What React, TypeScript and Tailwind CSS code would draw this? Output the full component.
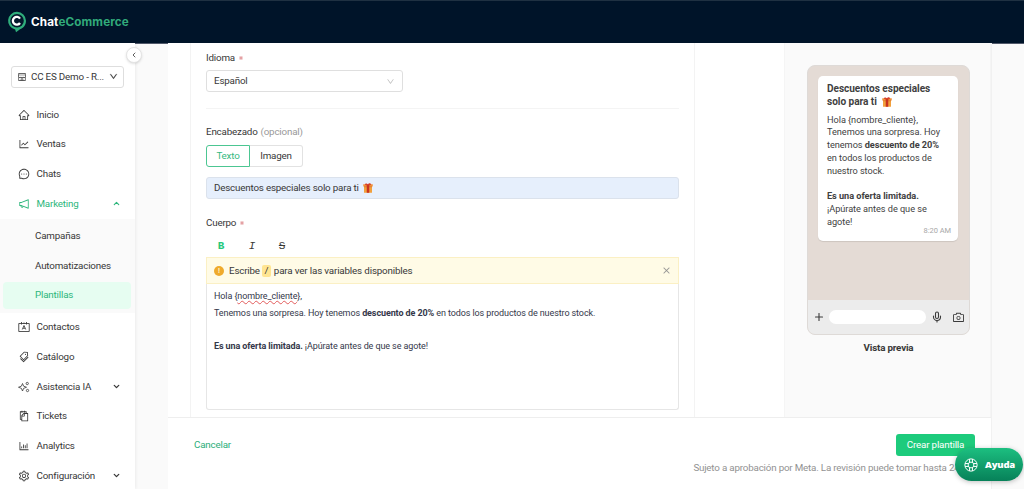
import type { ReactNode } from "react";
import {
  AiOutlineBarChart,
  AiOutlineCamera,
  AiOutlineClose,
  AiOutlineDown,
  AiOutlineHome,
  AiOutlineLineChart,
  AiOutlineMessage,
  AiOutlineNotification,
  AiOutlineSetting,
  AiOutlineShop,
  AiOutlineSnippets,
  AiOutlineTags,
} from "react-icons/ai";
import { ChevronDown, ChevronLeft, ChevronUp, Mic, Plus } from "lucide-react";

function Gift({ className }: { className: string }) {
  return (
    <svg viewBox="0 0 20 20" className={className}>
      <path d="M2 6h16v13.500H2z" fill="#f2a03c" />
      <path d="M2 6h16v2.500H2z" fill="#d9782c" />
      <path d="M.5 2.500h19v4.500H.5z" fill="#f0913a" />
      <path d="M7.500 3h5v16.500h-5z" fill="#c8321f" />
      <path d="M10 4.500C7 5 3.500 4.500 4 2c.8-2 5-1 6 1.500C11-.999 15.200 0 16 2c.5 2.500-3 3-6 2.500z" fill="#d8402a" />
    </svg>
  );
}

function ContactIcon() {
  return (
    <svg viewBox="0 0 24 24" className="size-[12px]" fill="none" stroke="currentColor" strokeWidth="1.700">
      <path d="M1.500 5h21v16h-21zM7 2v5M17 2v5M12 3v3" />
      <path d="M8.500 17l3.500-8 3.500 8M10 14.500h4" />
    </svg>
  );
}

function SparkIcon() {
  return (
    <svg viewBox="0 0 24 24" className="size-[11px]" fill="none" stroke="currentColor" strokeWidth="1.600" strokeLinejoin="round">
      <path d="M9 5l2.200 5.300L17 12.500l-5.800 2.200L9 20l-2.200-5.300L1 12.500l5.800-2.200z" />
      <circle cx="18.500" cy="5" r="2.300" />
      <circle cx="19" cy="19" r="2.300" />
    </svg>
  );
}

function Logo() {
  return (
    <svg viewBox="0 0 20 22" className="h-[22px] w-[20px]">
      <path d="M10 .8a9 9 0 0 1 9 9c0 4.200-2.600 7.300-6 8.500L9 21.300l-.8-2.700A9 9 0 0 1 10 .8z" fill="#2fae7c" />
      <circle cx="10" cy="9.800" r="6.800" fill="#04182c" />
      <path d="M13 7.600a3.900 3.900 0 1 0 0 4.400" fill="none" stroke="#fff" strokeWidth="2.300" />
    </svg>
  );
}

function Row({ icon, label, arrow, active }: { icon: ReactNode; label: string; arrow?: "up" | "down"; active?: boolean }) {
  return (
    <div className={`flex h-[29.65px] items-center pl-[18px] pr-[14px] ${active ? "text-[#2db67c]" : "text-[#383838]"}`}>
      <span className="flex w-[18.500px] items-center [&>svg]:size-[12px]">{icon}</span>
      <span className="flex-1">{label}</span>
      {arrow === "up" && <ChevronUp className="size-[9px]" strokeWidth={3} />}
      {arrow === "down" && <ChevronDown className="size-[9px]" strokeWidth={3.400} />}
    </div>
  );
}

function Sidebar() {
  return (
    <aside className="w-[135px] shrink-0 bg-white shadow-[1px_0_3px_rgba(0,0,0,0.06)]">
      <div className="mx-[11px] mt-[22.500px] flex h-[22px] items-center rounded-[3px] border border-[#dedede] px-[5px] text-[#383838]">
        <AiOutlineShop className="size-[10px]" />
        <span className="ml-[4px] flex-1 whitespace-nowrap">CC ES Demo - R...</span>
        <AiOutlineDown className="size-[9px] stroke-[35] stroke-current" />
      </div>
      <nav className="mt-[12.500px]">
        <Row icon={<AiOutlineHome />} label="Inicio" />
        <Row icon={<AiOutlineLineChart />} label="Ventas" />
        <Row icon={<AiOutlineMessage />} label="Chats" />
        <Row icon={<AiOutlineNotification />} label="Marketing" arrow="up" active />
        <div className="bg-[#fafafa] py-[2.600px] text-[#383838]">
          <div className="flex h-[29.650px] items-center pl-[35px]">Campañas</div>
          <div className="flex h-[29.650px] items-center pl-[35px]">Automatizaciones</div>
          <div className="flex h-[29.650px] items-center px-[3px]">
            <div className="flex h-[27px] w-[128px] items-center rounded-[4px] bg-[#e6fdf1] pl-[32px] text-[#2db67c]">Plantillas</div>
          </div>
        </div>
        <Row icon={<ContactIcon />} label="Contactos" />
        <Row icon={<AiOutlineTags />} label="Catálogo" />
        <Row icon={<SparkIcon />} label="Asistencia IA" arrow="down" />
        <Row icon={<AiOutlineSnippets className="-scale-x-100" />} label="Tickets" />
        <Row icon={<AiOutlineBarChart />} label="Analytics" />
        <Row icon={<AiOutlineSetting />} label="Configuración" arrow="down" />
      </nav>
    </aside>
  );
}

function Required() {
  return (
    <svg viewBox="0 0 10 10" className="ml-[4px] size-[4px] text-[#e29a9c]" stroke="currentColor" strokeWidth="2.500">
      <path d="M5 0v10M.7 2.500l8.600 5M.7 7.500l8.600-5" />
    </svg>
  );
}

function TemplateForm() {
  return (
    <section className="ml-[22px] h-[374px] w-[505px] border-x border-[#f3f3f3] px-[15px]">
      <div className="flex h-[27px] items-center pt-[2px]">
        Idioma
        <Required />
      </div>
      <div className="flex h-[22px] w-[197px] items-center justify-between rounded-[3px] border border-[#dfdfdf] px-[7px]">
        Español
        <AiOutlineDown className="size-[9px] text-[#bdbdbd]" />
      </div>
      <div className="mt-[16px] h-px bg-[#f4f4f4]" />
      <div className="mt-[16px] flex h-[14px] items-center">
        Encabezado<span className="ml-[3px] text-[#999]">(opcional)</span>
      </div>
      <div className="mt-[6px] flex h-[22px] w-[97px]">
        <div className="flex w-[44px] items-center justify-center rounded-l-[3px] border border-[#4cc692] text-[#35b981]">Texto</div>
        <div className="flex flex-1 items-center justify-center rounded-r-[3px] border border-l-0 border-[#e2e2e2]">Imagen</div>
      </div>
      <div className="mt-[10px] flex h-[22px] items-center rounded-[3px] border border-[#dbe2ec] bg-[#e6effc] px-[7px]">
        Descuentos especiales solo para ti
        <Gift className="ml-[4px] size-[10px]" />
      </div>
      <div className="mt-[17px] flex h-[14px] items-center">
        Cuerpo
        <Required />
      </div>
      <div className="mt-[10px] flex h-[12px] items-center pl-[9px] font-['Liberation_Mono',monospace] text-[11px]">
        <span className="w-[12px] text-center font-bold text-[#25c97c]">B</span>
        <span className="ml-[18px] w-[14px] text-center italic">I</span>
        <span className="ml-[17px] w-[12px] text-center line-through">S</span>
      </div>
      <div className="mt-[5px] flex h-[27px] items-center border border-[#fbf0c4] bg-[#fffbe6] px-[7px]">
        <span className="flex size-[10px] items-center justify-center rounded-full bg-[#efaa2c] text-[7px] font-bold tracking-normal text-[#fff4c8]">!</span>
        <span className="ml-[5px]">Escribe</span>
        <span className="mx-[2px] flex h-[12px] w-[9px] items-center justify-center rounded-[2px] bg-[#ffe591]">/</span>
        <span className="ml-[1px] flex-1 tracking-[-0.160px]">para ver las variables disponibles</span>
        <AiOutlineClose className="size-[9px] stroke-[20] stroke-current text-[#909090]" />
      </div>
      <div className="h-[126px] rounded-b-[3px] border border-t-0 border-[#e6e6e6] px-[7px] pt-[4px] text-[9px] leading-[16.500px] tracking-[-0.100px] text-[#34374a]">
        <p>
          Hola {"{"}
          <span className="underline decoration-[#e25b5b] decoration-wavy decoration-[0.700px] underline-offset-1">nombre_cliente</span>
          {"},"}
        </p>
        <p>
          Tenemos una sorpresa. Hoy tenemos <b>descuento de 20%</b> en todos los productos de nuestro stock.
        </p>
        <p className="h-[16.500px]" />
        <p>
          <b>Es una oferta limitada.</b> ¡Apúrate antes de que se agote!
        </p>
      </div>
    </section>
  );
}

function Preview() {
  return (
    <section className="ml-auto flex h-[374px] w-[207px] flex-col items-center border-l border-r border-[#f5f5f5] bg-[#fafafa] pl-[2px] pt-[22px]">
      <div className="flex h-[270px] w-[163px] flex-col overflow-hidden rounded-[8px] border border-[#dedad7] bg-[#e4dbd5]">
        <div className="h-[234px] p-[10px]">
          <div className="h-[165px] w-[140px] rounded-[5px] bg-white pl-[9px] pr-[7px] pt-[7px] text-[9.200px] leading-[12.800px] tracking-[-0.050px] text-[#3f3f3f] shadow-[0_1px_1px_rgba(0,0,0,0.1)]">
            <p className="whitespace-nowrap text-[10.100px] font-bold">
              Descuentos especiales
              <br />
              <span className="flex items-center">
                solo para ti <Gift className="ml-[5px] size-[10px]" />
              </span>
            </p>
            <p className="mt-[5px] whitespace-nowrap">
              Hola {"{nombre_cliente},"}
              <br />
              Tenemos una sorpresa. Hoy
              <br />
              tenemos <b>descuento de 20%</b>
              <br />
              en todos los productos de
              <br />
              nuestro stock.
            </p>
            <p className="mt-[12.800px] whitespace-nowrap">
              <b>Es una oferta limitada.</b>
              <br />
              ¡Apúrate antes de que se
              <br />
              agote!
            </p>
            <div className="-mt-[4px] text-right text-[7.500px] text-[#a8a8a8]">8:20 AM</div>
          </div>
        </div>
        <div className="flex flex-1 items-center bg-[#ececec] pl-[5px] pr-[4px] text-[#3b3b3b]">
          <Plus className="size-[12px]" strokeWidth={2.200} />
          <div className="ml-[4px] h-[14px] w-[97px] rounded-full bg-white" />
          <Mic className="ml-[5px] size-[12px]" strokeWidth={2.200} />
          <AiOutlineCamera className="ml-auto size-[13px]" />
        </div>
      </div>
      <div className="mt-[6px] font-bold">Vista previa</div>
    </section>
  );
}

function Help() {
  return (
    <div className="absolute left-[955px] top-[448px] flex h-[33px] w-[68px] items-center rounded-full bg-linear-to-t from-[#078159] to-[#1cbf80] pl-[9px] font-['Open_Sans',sans-serif] text-[9.500px] font-extrabold tracking-[-0.200px] text-white shadow-[0_1px_5px_rgba(0,0,0,0.25)]">
      <svg viewBox="0 0 24 24" className="mr-[7px] size-[14px]" fill="none" stroke="currentColor" strokeWidth="1.700">
        <circle cx="12" cy="12" r="10.500" />
        <circle cx="12" cy="12" r="5" />
        <path d="M9.500 1.800v5.700M14.500 1.800v5.700M9.500 16.500v5.700M14.500 16.500v5.700M1.800 9.500h5.700M1.800 14.500h5.700M16.500 9.500h5.700M16.500 14.500h5.700" />
      </svg>
      Ayuda
    </div>
  );
}

export default function App() {
  return (
    <div className="relative flex h-[489px] w-[1024px] flex-col overflow-hidden bg-[#fafafa] font-[Roboto,sans-serif] text-[9.800px] leading-[14px] tracking-[-0.190px] text-[#383838]">
      <header className="flex h-[43px] shrink-0 items-center border-t border-[#1f3142] bg-[#001429] pl-[7px] shadow-[0_1px_0_#51596a]">
        <Logo />
        <span className="ml-[4px] font-[Inter,sans-serif] text-[11.700px] font-bold tracking-[0.130px] text-white">
          Chat<span className="text-[#31aa7a]">eCommerce</span>
        </span>
      </header>
      <div className="flex min-h-0 flex-1">
        <Sidebar />
        <main className="ml-[33px] flex w-[824px] flex-col border-r border-[#f1f1f1] bg-white">
          <div className="flex h-[374px]">
            <TemplateForm />
            <Preview />
          </div>
          <footer className="flex flex-1 justify-between border-t border-[#eeeeee] pl-[26px] pr-[16px] pt-[16px]">
            <span className="mt-[4px] h-[14px] text-[#2cae7a]">Cancelar</span>
            <div className="flex flex-col items-end">
              <button className="h-[22px] w-[79px] rounded-[3px] bg-[#1dcb7c] text-white">Crear plantilla</button>
              <span className="mt-[5px] whitespace-nowrap text-[#929292]">Sujeto a aprobación por Meta. La revisión puede tomar hasta 24 hrs</span>
            </div>
          </footer>
        </main>
      </div>
      <div className="absolute left-[126px] top-[47px] flex size-[16px] items-center justify-center rounded-full border border-[#e4e4e4] bg-white shadow-sm">
        <ChevronLeft className="size-[8px] text-[#555]" strokeWidth={2.800} />
      </div>
      <Help />
    </div>
  );
}
